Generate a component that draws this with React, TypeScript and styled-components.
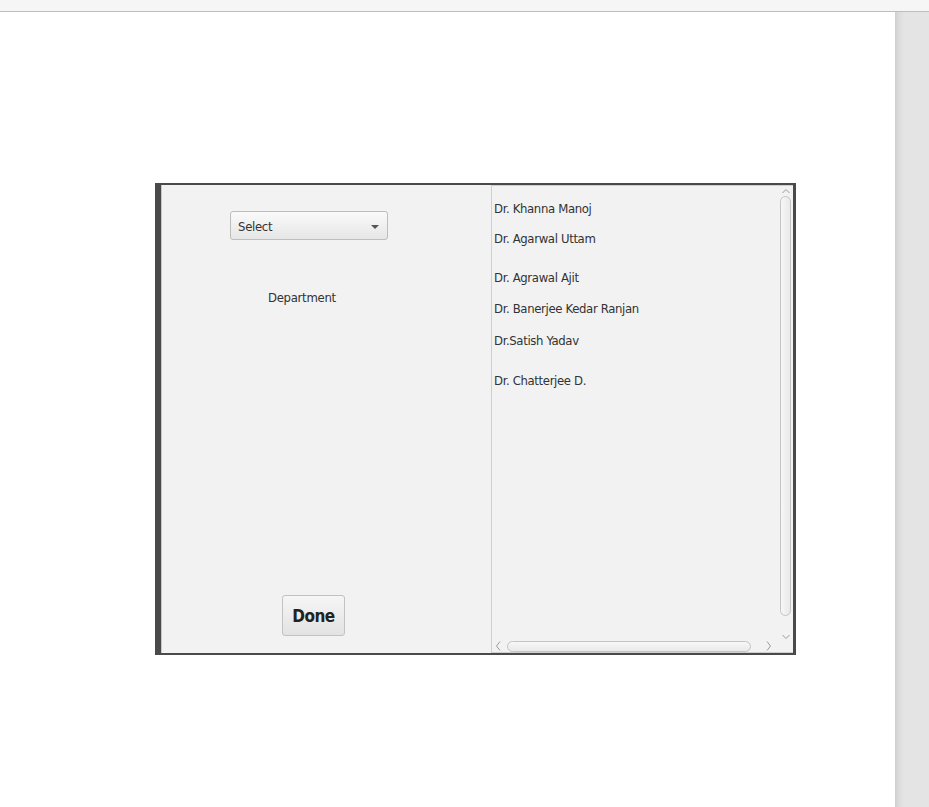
import React from "react";
import styled, { createGlobalStyle } from "styled-components";

const Global = createGlobalStyle`
  html, body { margin: 0; padding: 0; background: #ffffff; }
  body { font-family: "DejaVu Sans Condensed", "DejaVu Sans", "Liberation Sans", sans-serif; font-stretch: condensed; }
`;

const Page = styled.div`
  display: flex;
  flex-direction: column;
  width: 929px;
  height: 807px;
  overflow: hidden;
`;

const TopBar = styled.div`
  height: 11px;
  flex: none;
  background: #f6f6f6;
  border-bottom: 1px solid #bdbdbd;
`;

const Body = styled.div`
  flex: 1;
  display: flex;
`;

const Main = styled.div`
  flex: 1;
  padding: 171px 0 0 155px;
  background: #ffffff;
`;

const Sidebar = styled.div`
  width: 34px;
  flex: none;
  background: linear-gradient(to right, #cfcfcf 0px, #dcdcdc 4px, #e4e4e4 9px, #e4e4e4 100%);
`;

const Dialog = styled.div`
  width: 641px;
  height: 472px;
  box-sizing: border-box;
  border-style: solid;
  border-color: #4a4a4a;
  border-width: 2px 3px 2px 6px;
  display: grid;
  grid-template-columns: 330px 1fr;
  background: #f2f2f2;
  box-shadow: inset 1px 0 0 #c8c8c8;
`;

const LeftPane = styled.div`
  display: flex;
  flex-direction: column;
  align-items: flex-start;
  padding-top: 26px;
  padding-bottom: 17px;
`;

const SelectBox = styled.div`
  margin-left: 69px;
  width: 158px;
  height: 29px;
  box-sizing: border-box;
  border: 1px solid #bdbdbd;
  border-radius: 3px;
  background: linear-gradient(#fafafa, #e6e6e6);
  display: flex;
  align-items: center;
  justify-content: space-between;
  padding: 1px 8px 0 7px;
  font-size: 13px;
  letter-spacing: -0.3px;
  color: #333;
`;

const Caret = styled.span`
  width: 0;
  height: 0;
  border-left: 4px solid transparent;
  border-right: 4px solid transparent;
  border-top: 4px solid #555;
  margin-top: 1px;
`;

const Label = styled.div`
  margin-left: 107px;
  margin-top: 50px;
  font-size: 13px;
  letter-spacing: -0.3px;
  color: #333;
`;

const DoneButton = styled.div`
  margin-top: auto;
  margin-left: 121px;
  width: 63px;
  height: 41px;
  box-sizing: border-box;
  border: 1px solid #c2c2c2;
  border-radius: 3px;
  background: linear-gradient(#f6f6f6, #e2e2e2);
  display: flex;
  align-items: center;
  justify-content: center;
  font-weight: bold;
  font-size: 17px;
  letter-spacing: -0.5px;
  color: #222;
`;

const ListPane = styled.div`
  position: relative;
  border: 1px solid #cfcfcf;
  border-right: none;
  display: grid;
  grid-template-columns: 1fr 15px;
  grid-template-rows: 1fr 12px;
`;

const ListBody = styled.div`
  display: flex;
  flex-direction: column;
  padding: 14px 0 0 2px;
`;

const Item = styled.div<{ $gap: number }>`
  font-size: 13px;
  letter-spacing: -0.35px;
  color: #333;
  height: 18px;
  line-height: 18px;
  margin-bottom: ${(p) => p.$gap}px;
`;

const VScroll = styled.div`
  display: flex;
  flex-direction: column;
  align-items: center;
  padding: 2px 0 0;
`;

const VThumb = styled.div`
  flex: 1;
  width: 11px;
  box-sizing: border-box;
  border: 1px solid #c4c4c4;
  border-radius: 6px;
  background: linear-gradient(to right, #f7f7f7, #e9e9e9);
  margin: 2px 0 18px;
`;

const HScroll = styled.div`
  display: flex;
  align-items: center;
  padding: 0 0 0 3px;
`;

const HThumb = styled.div`
  width: 244px;
  height: 11px;
  box-sizing: border-box;
  border: 1px solid #c4c4c4;
  border-radius: 6px;
  background: linear-gradient(#f7f7f7, #e9e9e9);
  margin: 0 15px 0 6px;
`;

const Corner = styled.div``;

const Chevron = ({ d, w = 8, h = 6 }: { d: string; w?: number; h?: number }) => (
  <svg width={w} height={h} viewBox={`0 0 ${w} ${h}`} fill="none" stroke="#9a9a9a" strokeWidth="1">
    <path d={d} />
  </svg>
);

const doctors: [string, number][] = [
  ["Dr. Khanna Manoj", 12],
  ["Dr. Agarwal Uttam", 21],
  ["Dr. Agrawal Ajit", 13],
  ["Dr. Banerjee Kedar Ranjan", 14],
  ["Dr.Satish Yadav", 22],
  ["Dr. Chatterjee D.", 0],
];

export default function App() {
  return (
    <Page>
      <Global />
      <TopBar />
      <Body>
        <Main>
          <Dialog>
            <LeftPane>
              <SelectBox>
                <span>Select</span>
                <Caret />
              </SelectBox>
              <Label>Department</Label>
              <DoneButton>Done</DoneButton>
            </LeftPane>
            <ListPane>
              <ListBody>
                {doctors.map(([n, g]) => (
                  <Item key={n} $gap={g}>{n}</Item>
                ))}
              </ListBody>
              <VScroll>
                <Chevron d="M0.5 5 L4 1.5 L7.5 5" />
                <VThumb />
                <Chevron d="M0.5 1 L4 4.5 L7.5 1" />
              </VScroll>
              <HScroll>
                <Chevron w={6} h={10} d="M5 0.5 L1.5 5 L5 9.5" />
                <HThumb />
                <Chevron w={6} h={10} d="M1 0.5 L4.5 5 L1 9.5" />
              </HScroll>
              <Corner />
            </ListPane>
          </Dialog>
        </Main>
        <Sidebar />
      </Body>
    </Page>
  );
}
